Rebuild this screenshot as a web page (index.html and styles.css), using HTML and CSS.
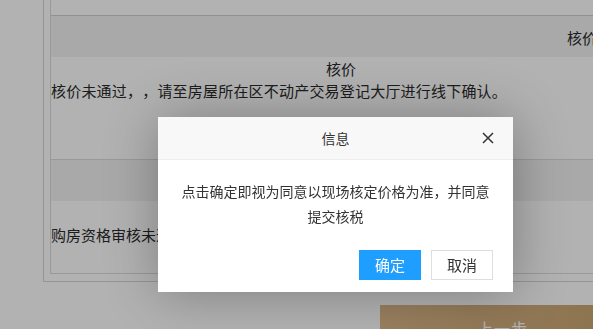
FILE: index.html
```html
<!DOCTYPE html>
<html lang="zh-CN">
<head>
    <meta charset="UTF-8">
    <meta name="viewport" content="width=device-width, initial-scale=1.0">
    <title>信息</title>
    <link rel="stylesheet" href="styles.css">
</head>
<body>
    <div class="panel">
        <div class="table">
            <div class="row row-top"></div>
            <div class="row row-head">核价</div>
            <div class="row row-body">
                <div class="cell">
                    <div class="cell-title">核价</div>
                    <p class="cell-msg">核价未通过，，请至房屋所在区不动产交易登记大厅进行线下确认。</p>
                </div>
            </div>
            <div class="row row-head"></div>
            <div class="row row-msg">
                <p>购房资格审核未通过，请核实后重新提交。</p>
            </div>
        </div>
    </div>

    <button class="btn-prev">上一步</button>

    <div class="shade"></div>

    <div class="layer">
        <div class="layer-title">
            信息
            <span class="layer-close">
                <svg width="12" height="12" viewBox="0 0 12 12">
                    <path d="M1 1 L11 11 M11 1 L1 11" stroke="#333" stroke-width="1.5" fill="none"/>
                </svg>
            </span>
        </div>
        <div class="layer-content">点击确定即视为同意以现场核定价格为准，并同意提交核税</div>
        <div class="layer-btns">
            <a class="btn btn-ok">确定</a>
            <a class="btn">取消</a>
        </div>
    </div>
</body>
</html>
```

FILE: styles.css
```css
* {
    margin: 0;
    padding: 0;
    box-sizing: border-box;
}

body {
    background: #fff;
    color: #2a2a2a;
    font-family: "Noto Sans CJK SC", "Microsoft YaHei", sans-serif;
    text-spacing-trim: space-all;
    overflow: hidden;
    width: 1200px;
}

.panel {
    width: 1078px;
    margin: -40px 0 0 43px;
    padding: 6px 6px 7px;
    border: 1px solid #d6d6d6;
}

.table {
    border: 1px solid #dcdcdc;
    border-top: 0;
    font-size: 15px;
}

.row-top {
    height: 49px;
    border-bottom: 1px solid #d0d0d0;
}

.row-head {
    height: 41px;
    line-height: 43px;
    background: #f2f2f2;
    text-align: center;
}

.row-body {
    height: 103px;
    border-bottom: 1px solid #dcdcdc;
}

.cell {
    width: 580px;
    line-height: 22px;
    padding-top: 1px;
}

.cell-title {
    text-align: center;
}

.cell-msg {
    letter-spacing: 0.2px;
}

.row-msg {
    height: 72px;
    line-height: 22px;
    padding-top: 23px;
}

.btn-prev {
    display: block;
    width: 245px;
    height: 46px;
    margin: 23px 0 0 380px;
    border: none;
    background: linear-gradient(90deg, #dcb889, #c9a572);
    color: #fff;
    font-family: inherit;
    font-size: 16px;
    letter-spacing: 1px;
}

.shade {
    position: fixed;
    top: 0;
    left: 0;
    right: 0;
    bottom: 0;
    background: rgba(0, 0, 0, 0.3);
}

.layer {
    position: fixed;
    left: 158px;
    top: 117px;
    width: 355px;
    background: #fff;
    box-shadow: 1px 1px 50px rgba(0, 0, 0, 0.3);
    font-size: 14px;
}

.layer-title {
    position: relative;
    height: 43px;
    line-height: 42px;
    background: #f8f8f8;
    border-bottom: 1px solid #eee;
    text-align: center;
    color: #333;
}

.layer-close {
    position: absolute;
    right: 19px;
    top: 15px;
    width: 12px;
    height: 12px;
    line-height: 0;
}

.layer-content {
    padding: 19px 18px 0;
    line-height: 25px;
    text-align: center;
    color: #333;
}

.layer-btns {
    display: flex;
    justify-content: flex-end;
    gap: 10px;
    padding: 21px 20px 12px;
}

.btn {
    display: block;
    width: 62px;
    height: 30px;
    line-height: 28px;
    border: 1px solid #dedede;
    background: #fff;
    color: #333;
    text-align: center;
    font-size: 15px;
}

.btn-ok {
    border-color: #1e9fff;
    background: #1e9fff;
    color: #fff;
}
```
